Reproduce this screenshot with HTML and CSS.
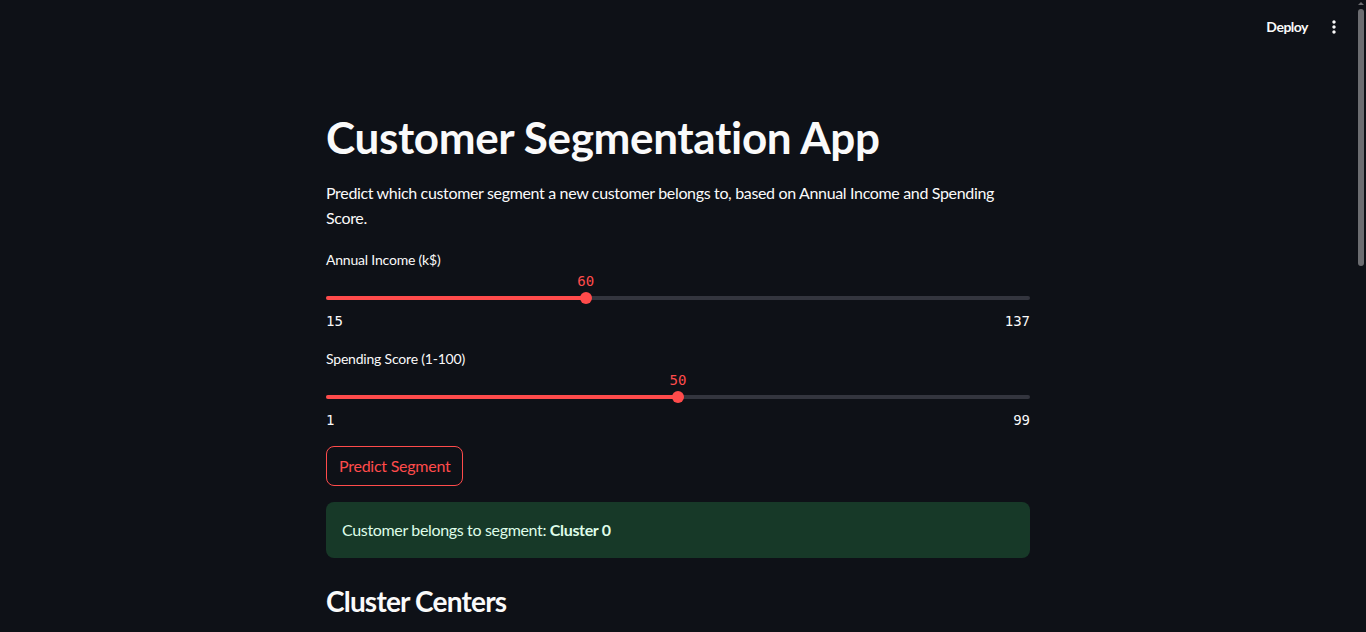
FILE: index.html
```html
<!DOCTYPE html>
<html lang="en">
<head>
<meta charset="utf-8">
<title>Customer Segmentation App</title>
<link rel="stylesheet" href="styles.css">
</head>
<body>
<div class="app">
  <div class="viewport">
    <header class="header">
      <span class="deploy">Deploy</span>
      <span class="menu" aria-label="Main menu">
        <svg viewBox="0 0 24 24" width="20" height="20"><path fill="#fafafa" d="M12 8c1.1 0 2-.9 2-2s-.9-2-2-2-2 .9-2 2 .9 2 2 2zm0 2c-1.1 0-2 .9-2 2s.9 2 2 2 2-.9 2-2-.9-2-2-2zm0 6c-1.1 0-2 .9-2 2s.9 2 2 2 2-.9 2-2-.9-2-2-2z"/></svg>
      </span>
    </header>
    <main class="main">
      <h1 class="title">Customer Segmentation App</h1>
      <p class="intro">Predict which customer segment a new customer belongs to, based on Annual Income and Spending Score.</p>

      <div class="slider">
        <div class="slider-label">Annual Income (k$)</div>
        <div class="slider-box">
          <div class="track"><div class="fill" style="width:36.89%"></div></div>
          <div class="thumb" style="left:36.89%"><span class="thumb-value">60</span></div>
        </div>
        <div class="ticks"><span>15</span><span>137</span></div>
      </div>

      <div class="slider">
        <div class="slider-label">Spending Score (1-100)</div>
        <div class="slider-box">
          <div class="track"><div class="fill" style="width:50%"></div></div>
          <div class="thumb" style="left:50%"><span class="thumb-value">50</span></div>
        </div>
        <div class="ticks"><span>1</span><span>99</span></div>
      </div>

      <button class="btn" type="button">Predict Segment</button>

      <div class="alert">Customer belongs to segment: <strong>Cluster 0</strong></div>

      <h3 class="subheader">Cluster Centers</h3>
    </main>
  </div>
  <div class="scrollbar">
    <div class="scroll-arrow"></div>
    <div class="scroll-thumb"></div>
  </div>
</div>
</body>
</html>
```
FILE: styles.css
```css
html, body {
  margin: 0;
  padding: 0;
  height: 100%;
  overflow: hidden;
  background: #0e1117;
}
body {
  font-family: Lato, "Noto Sans", sans-serif;
  color: #fafafa;
}
.app {
  display: flex;
  height: 632px;
}
.viewport {
  flex: 1;
  min-width: 0;
}
.header {
  height: 53px;
  display: flex;
  align-items: center;
  justify-content: flex-end;
  gap: 16px;
  padding-right: 12px;
}
.deploy {
  font-size: 14px;
  font-weight: 700;
  color: #fafafa;
  letter-spacing: -0.5px;
}
.menu {
  display: flex;
  width: 20px;
  height: 20px;
}
.main {
  width: 704px;
  margin: 0 auto;
  padding-top: 58px;
}
.title {
  margin: 0;
  font-size: 44px;
  line-height: 52.8px;
  font-weight: 700;
  letter-spacing: -0.35px;
}
.intro {
  margin: 16px 0 0;
  font-size: 16px;
  line-height: 25.6px;
  letter-spacing: -0.34px;
}
.slider {
  margin-top: 19px;
}
.slider + .slider {
  margin-top: 20px;
}
.slider-label {
  font-size: 14px;
  line-height: 20px;
  letter-spacing: -0.2px;
}
.slider-box {
  position: relative;
  height: 43px;
}
.track {
  position: absolute;
  left: 0;
  right: 0;
  top: 26px;
  height: 4px;
  border-radius: 2px;
  background: #33353e;
}
.fill {
  height: 100%;
  border-radius: 2px;
  background: #ff4b4b;
}
.thumb {
  position: absolute;
  top: 22px;
  width: 12px;
  height: 12px;
  margin-left: -6px;
  border-radius: 50%;
  background: #ff4b4b;
}
.thumb-value {
  position: absolute;
  left: 50%;
  bottom: 15px;
  transform: translateX(-50%);
  font-family: "DejaVu Sans Mono", "Liberation Mono", monospace;
  font-size: 14px;
  line-height: 16px;
  color: #ff4b4b;
}
.ticks {
  display: flex;
  justify-content: space-between;
  font-family: "DejaVu Sans Mono", "Liberation Mono", monospace;
  font-size: 14px;
  line-height: 16px;
  color: #fafafa;
}
.btn {
  display: block;
  margin-top: 18px;
  height: 40px;
  padding: 0 12px;
  border: 1px solid #ff4b4b;
  border-radius: 8px;
  background: #0e1117;
  color: #ff4b4b;
  font-family: Lato, "Noto Sans", sans-serif;
  font-size: 16px;
  letter-spacing: -0.25px;
}
.alert {
  margin-top: 16px;
  height: 56px;
  box-sizing: border-box;
  padding: 0 16px;
  line-height: 56px;
  border-radius: 8px;
  background: #173928;
  color: #dffde9;
  font-size: 16px;
  letter-spacing: -0.34px;
}
.alert strong {
  font-weight: 700;
}
.subheader {
  margin: 26px 0 0;
  font-size: 28px;
  line-height: 34px;
  font-weight: 700;
  letter-spacing: -0.8px;
}
.scrollbar {
  width: 10px;
  flex: none;
  display: flex;
  flex-direction: column;
  align-items: center;
  background: #0e1117;
}
.scroll-arrow {
  margin-top: 2px;
  width: 0;
  height: 0;
  border-left: 3px solid transparent;
  border-right: 3px solid transparent;
  border-bottom: 3px solid #6c6d71;
}
.scroll-thumb {
  margin-top: 4px;
  width: 6px;
  height: 257px;
  border-radius: 3px;
  background: #6c6d71;
}
```
